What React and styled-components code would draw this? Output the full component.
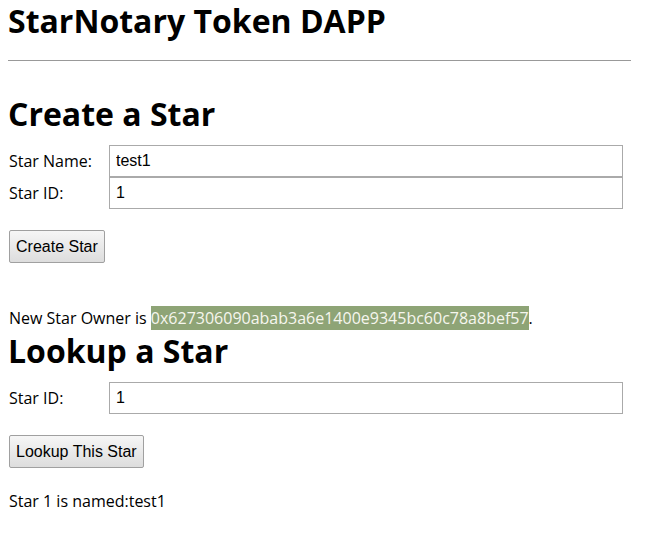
import React from "react";
import styled, { createGlobalStyle } from "styled-components";

const GlobalStyle = createGlobalStyle`
  html, body {
    margin: 0;
    padding: 0;
    background: #fff;
  }
  body {
    font-family: "Open Sans", sans-serif;
    color: #000;
  }
`;

const Page = styled.div`
  padding: 0 14px 0 8px;
`;

const Title = styled.h2`
  font-family: "Open Sans", sans-serif;
  font-weight: 700;
  font-size: 32px;
  line-height: 38px;
  margin: 2px 0 0 0;
`;

const Rule = styled.hr`
  border: none;
  border-top: 1px solid #999;
  margin: 20px 0 0 0;
  height: 0;
`;

const Heading = styled.h1`
  font-family: "Open Sans", sans-serif;
  font-weight: 700;
  font-size: 32px;
  line-height: 40px;
  margin: ${(p) => p.$top || "0"} 0 0 0;
`;

const Form = styled.div`
  display: grid;
  grid-template-columns: 101px 514px;
  margin-top: ${(p) => p.$top || "8px"};
`;

const Label = styled.label`
  font-family: "Open Sans", sans-serif;
  font-size: 16px;
  display: flex;
  align-items: center;
  height: 32px;
  padding-left: 1px;
`;

const Input = styled.input`
  box-sizing: border-box;
  height: 32px;
  width: 514px;
  margin: 0;
  border: 1px solid #aaa;
  padding: 0 6px;
  font-family: "Liberation Sans", Arial, sans-serif;
  font-size: 16px;
  color: #000;
  outline: none;
`;

const Button = styled.button`
  font-family: "Liberation Sans", Arial, sans-serif;
  font-size: 16px;
  color: #000;
  height: 33px;
  padding: 0 6px;
  margin: ${(p) => p.$top || "21px"} 0 0 1px;
  border: 1px solid #a0a0a0;
  border-radius: 2px;
  background: linear-gradient(#f6f6f6, #dddddd);
  display: block;
`;

const Status = styled.p`
  font-family: "Open Sans", sans-serif;
  font-size: 16px;
  line-height: 22px;
  margin: ${(p) => p.$top || "0"} 0 0 1px;
`;

const Address = styled.span`
  background: #8ea476;
  color: #f6f6ee;
  padding: 1px 0;
`;

export default function App() {
  return (
    <>
      <GlobalStyle />
      <Page>
        <Title>StarNotary Token DAPP</Title>
        <Rule />
        <Heading $top="33px">Create a Star</Heading>
        <Form $top="11px">
          <Label>Star Name:</Label>
          <Input defaultValue="test1" />
          <Label>Star ID:</Label>
          <Input defaultValue="1" />
        </Form>
        <Button $top="21px">Create Star</Button>
        <Status $top="44px">
          New Star Owner is <Address>0x627306090abab3a6e1400e9345bc60c78a8bef57</Address>.
        </Status>
        <Heading $top="2px">Lookup a Star</Heading>
        <Form $top="11px">
          <Label>Star ID:</Label>
          <Input defaultValue="1" />
        </Form>
        <Button $top="21px">Lookup This Star</Button>
        <Status $top="22px">Star 1 is named:test1</Status>
      </Page>
    </>
  );
}
